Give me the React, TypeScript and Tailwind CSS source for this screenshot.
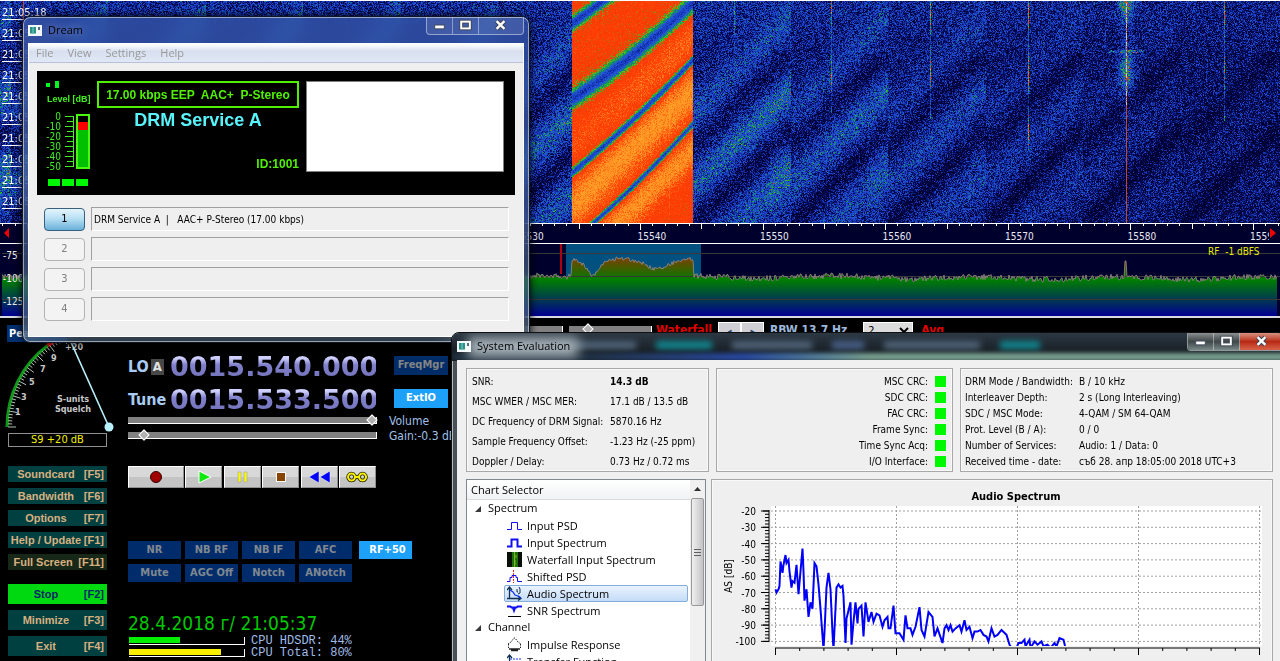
import React, { useEffect, useRef } from "react";
import clsx from "clsx";

const tahoma = "font-['DejaVu_Sans_Condensed','DejaVu_Sans',sans-serif]";
const segoe = "font-['Open_Sans','Noto_Sans',sans-serif]";
const arial = "font-['Liberation_Sans',Arial,sans-serif]";

// small seeded generator, so the noise is the same on every load
const createRandom = (seed: number) => () => {
  seed = (seed * 1664525 + 1013904223) >>> 0;
  return seed / 4294967296;
};

/* ---------- waterfall ---------- */

const palette: [number, number[]][] = [
  [0, [0, 0, 44]],
  [0.15, [4, 12, 92]],
  [0.32, [24, 58, 190]],
  [0.45, [36, 84, 222]],
  [0.55, [26, 120, 140]],
  [0.63, [18, 165, 60]],
  [0.7, [70, 205, 30]],
  [0.76, [250, 56, 4]],
  [0.84, [255, 66, 6]],
  [0.93, [255, 148, 36]],
  [1.1, [255, 190, 40]],
];

const toColor = (v: number) => {
  if (v <= 0) return palette[0][1];
  for (let i = 1; i < palette.length; i++) {
    const [stop, to] = palette[i];
    const [prev, from] = palette[i - 1];
    if (v <= stop) {
      const k = (v - prev) / (stop - prev);
      return from.map((c, n) => c + (to[n] - c) * k);
    }
  }
  return palette[palette.length - 1][1];
};

const gauss = (d: number, w: number) => Math.exp(-(d * d) / (w * w));

// dark fades crossing the broadcast: y on the left edge, y on the right edge, half width
const fades = [
  [22, -78, 6],
  [98, 1, 8],
  [171, 58, 4],
  [240, 122, 3],
];

// spurs: x, last y, strength
const carriers = [
  [734, 50, 0.3],
  [831, 112, 0.4],
  [930, 118, 0.5],
  [1028, 150, 0.58],
  [1224, 120, 0.48],
];

const signalLevel = (x: number, y: number) => {
  if (x >= 572 && x < 693) {
    const t = (x - 572) / 121;
    let level = 0.8;
    const mid = 136 - 108 * t;
    const low = 205 - 116 * t;
    level += 0.07 * gauss(y - mid - 6, 22) * (0.6 + t * 0.4);
    level += 0.14 * gauss(y - low, 24);
    level += 0.13 * gauss(y - low - 60, 18);
    if (x === 641 || x === 669) level += 0.03;
    for (const [left, right, width] of fades) {
      const d = Math.abs(y - (left + (right - left) * t + 4 * Math.sin(t * 3.1)));
      level -= 0.42 * gauss(d, width) + 0.06 * gauss(d, width * 2);
    }
    return level;
  }

  const cell = (((x - 693) % 97.5) + 97.5) % 97.5;
  const reach = x < 572 ? 0.85 : Math.max(0.08, 1 - (x - 693) / 560);
  const line = y + cell * 0.98;
  const rise = 0.65 + (cell / 97.5) * 0.4;
  let level = 0.13 + 0.06 * reach;
  level += 0.33 * reach * rise * gauss(line - 184, 22);
  level += 0.17 * reach * gauss(line - 112, 20);
  level += 0.26 * reach * rise * gauss(line - 264, 24);
  level -= 0.08 * gauss(line - 146, 12) * (y > 50 ? 1 : 0);
  level -= 0.12 * gauss(line - 224, 12);
  if (y < 60) level += 0.08 * (1 - y / 60);
  if (cell > 76 && y > 130) level += 0.08 * reach;
  return level;
};

const Waterfall = () => {
  const ref = useRef<HTMLCanvasElement>(null);

  useEffect(() => {
    const canvas = ref.current;
    const ctx = canvas?.getContext("2d");
    if (!canvas || !ctx) return;
    const { width, height } = canvas;
    const image = ctx.createImageData(width, height);
    const random = createRandom(77);

    for (let y = 0; y < height; y++) {
      for (let x = 0; x < width; x++) {
        const inside = x >= 572 && x < 693;
        const noise = (random() + random() - 1) * (inside ? 0.07 : 0.33);
        let v = signalLevel(x, y) + noise;
        if (inside && v < 0.72) v += (random() - 0.5) * 0.16;
        for (const [cx, end, gain] of carriers) {
          if (x === cx && y < end) v += gain * (0.7 + 0.3 * Math.sin(y / 9));
        }
        const d = Math.abs(x - 1126);
        if (d < 14 && y < 118) v += 0.42 * gauss(d, 7) * (0.55 + 0.45 * Math.sin(y / 11 + 1.5));
        if (d < 18 && Math.abs(y - 50) < 2) v += 0.36 * random();
        let [r, g, b] = toColor(v);
        if (d === 0 || x === 23) {
          [r, g, b] = y < 105 && x > 30 && random() > 0.4 ? [205, 195, 150] : [190, 70, 50];
        }
        const i = (y * width + x) * 4;
        image.data[i] = r;
        image.data[i + 1] = g;
        image.data[i + 2] = b;
        image.data[i + 3] = 255;
      }
    }
    ctx.putImageData(image, 0, 0);
  }, []);

  return (
    <canvas ref={ref} width={1280} height={222} className="block h-[222px] w-full" />
  );
};

const times = ["18", "16", "14", "12", "10", "08", "06", "04", "02", "00"];

const TimeMarks = () => (
  <ul className="absolute left-0.5 top-1 flex flex-col gap-[5px] text-[11px] leading-4 text-white">
    {times.map((time) => (
      <li key={time}>
        <span className="underline underline-offset-3">21:0</span>5:{time}
      </li>
    ))}
  </ul>
);

const FrequencyScale = () => {
  const ticks = Array.from({ length: 105 }, (_, i) => i - 52);
  return (
    <svg className="block h-[21px] w-full bg-[#00002c]">
      <g stroke="#fff">
        <line x1="0" x2="100%" y1="0.5" y2="0.5" />
        <line x1="0" x2="100%" y1="20.5" y2="20.5" />
        {ticks.map((t) => {
          const x = Math.round(640 + t * 12.26) + 0.5;
          return <line key={t} x1={x} x2={x} y1="1" y2={t % 10 === 0 ? 7 : t % 5 === 0 ? 6 : 3} />;
        })}
      </g>
      <g fill="#e8e8f4" fontSize="10">
        {[15530, 15540, 15550, 15560, 15570, 15580, 15590].map((f, i) => (
          <text key={f} x={515 + i * 122.5} y="17">
            {f}
          </text>
        ))}
      </g>
      <rect x="1269" y="3" width="11" height="16" fill="#00002c" />
      <path d="M9 5v10l-5-5zM1270 5v10l6-5z" fill="#f00000" />
    </svg>
  );
};

const buildSpectrum = () => {
  const random = createRandom(9);
  const points: string[] = [];
  for (let x = 2; x <= 1277; x++) {
    let y = 33 + Math.sin(x / 23) * 1.2 + (random() - 0.5) * 6;
    if (x > 900) y += 1;
    if (x >= 572 && x <= 693) {
      const t = (x - 572) / 121;
      y = 15 + (random() - 0.5) * 4;
      y += 15 * gauss(x - 593, 9) + 10 * gauss(x - 657, 16) + (t < 0.2 ? 1 : 0);
    }
    if (x === 1125 || x === 1126) y = 17;
    points.push(`${x},${y.toFixed(1)}`);
  }
  return points.join(" ");
};

const spectrumLine = buildSpectrum();

const RfSpectrum = () => (
  <svg className="block h-[74px] w-full bg-[#00002c]">
    <defs>
      <linearGradient id="rf" gradientUnits="userSpaceOnUse" x1="0" x2="0" y1="8" y2="73">
        <stop offset="0" stopColor="#a03000" />
        <stop offset="0.36" stopColor="#187000" />
        <stop offset="0.42" stopColor="#008000" />
        <stop offset="0.98" stopColor="#000090" />
      </linearGradient>
    </defs>
    <rect x="566" y="0" width="135" height="34" fill="#005080" />
    <polygon points={`2,73 ${spectrumLine} 1277,73`} fill="url(#rf)" />
    <g stroke="#383838">
      <line x1="2" x2="100%" y1="9.5" y2="9.5" />
      <line x1="2" x2="100%" y1="32.5" y2="32.5" />
      <line x1="2" x2="100%" y1="55.5" y2="55.5" />
    </g>
    <polyline points={spectrumLine} fill="none" stroke="#9a8a8a" strokeWidth="0.8" />
    <rect x="560" y="0" width="2" height="30" fill="#b00010" />
    <rect x="0" y="72" width="100%" height="2" fill="#d8d8e0" />
    <g fill="#f0f0f0" fontSize="10">
      <text x="3" y="15">-75</text>
      <text x="3" y="38">-100</text>
      <text x="3" y="61">-125</text>
    </g>
    <text x="1208" y="11" fill="#e8e800" fontSize="10" xmlSpace="preserve">
      RF  -1 dBFS
    </text>
  </svg>
);

/* ---------- receiver controls ---------- */

const range = clsx(
  "h-[7px] shrink-0 appearance-none border-b border-r border-white bg-[#808080]",
  "[&::-webkit-slider-thumb]:size-2 [&::-webkit-slider-thumb]:appearance-none [&::-webkit-slider-thumb]:rotate-45",
  "[&::-webkit-slider-thumb]:border [&::-webkit-slider-thumb]:border-white [&::-webkit-slider-thumb]:bg-[#b0b0b0]"
);

const DisplayBar = () => (
  <div className="flex h-6 items-start overflow-hidden bg-black pl-[7px] pt-1 text-[12px] font-bold leading-4">
    <button className="mt-[3px] h-[18px] w-[60px] bg-[#003070] px-0.5 text-left text-[11px] leading-[18px] text-white">
      Peak
    </button>
    <input type="range" aria-label="Contrast" defaultValue={0} className={clsx(range, "ml-[380px] mt-1 w-[116px]")} />
    <input type="range" aria-label="Waterfall speed" defaultValue={20} className={clsx(range, "ml-1.5 mt-1 w-[83px]")} />
    <span className="ml-1 text-[#e00000]">Waterfall</span>
    <div className="ml-1.5 flex text-[9px] text-[#304878]">
      <button className="h-4 w-[23px] border border-white bg-[#d0d0d4]" aria-label="Less">◂</button>
      <button className="h-4 w-[23px] border border-white bg-[#d0d0d4]" aria-label="More">▸</button>
    </div>
    <span className="ml-1.5 text-[#9cb8dc]">RBW 13.7 Hz</span>
    <select aria-label="Averaging" className="ml-4 h-4 w-[50px] border border-white bg-[#dcdcdc] text-[11px] font-normal text-black">
      <option>2</option>
    </select>
    <span className="ml-2 text-[#e00000]">Avg</span>
  </div>
);

const polar = (angle: number, radius: number) => {
  const a = (angle * Math.PI) / 180;
  return [109 - radius * Math.cos(a), 85 - radius * Math.sin(a)];
};

const Smeter = () => {
  const [gx, gy] = polar(53, 102);
  const [rx, ry] = polar(70, 102);
  const marks = Array.from({ length: 38 }, (_, i) => i * 1.8);
  return (
    <svg className="block h-[91px] w-[120px]">
      <path d={`M7 85A102 102 0 0 1 ${gx} ${gy}`} fill="none" stroke="#109818" strokeWidth="3" />
      <path d={`M${gx} ${gy}A102 102 0 0 1 ${rx} ${ry}`} fill="none" stroke="#f01010" strokeWidth="4" />
      {marks.map((m, i) => {
        const [x1, y1] = polar(m, 101);
        const [x2, y2] = polar(m, i % 5 === 0 ? 93 : 97);
        return <line key={m} x1={x1} y1={y1} x2={x2} y2={y2} stroke="#c8d8c8" strokeWidth="0.9" />;
      })}
      <g fill="#c8c8c8" fontSize="9" fontWeight="bold">
        <text x="15" y="73">1</text>
        <text x="21" y="58">3</text>
        <text x="29" y="43">5</text>
        <text x="40" y="30">7</text>
        <text x="51" y="19">9</text>
        <text x="65" y="8">+20</text>
        <text x="73" y="60" textAnchor="middle">S-units</text>
        <text x="73" y="70" textAnchor="middle">Squelch</text>
      </g>
      <line x1="109" y1="85" x2="70" y2="-2" stroke="#b8f0fc" strokeWidth="1.6" />
      <circle cx="109" cy="85" r="4.5" fill="#b8f0fc" />
    </svg>
  );
};

const menuKeys = [
  { label: "Soundcard", key: "[F5]", style: "h-4 bg-[#004040] text-[#d8b080]" },
  { label: "Bandwidth", key: "[F6]", style: "h-4 bg-[#004040] text-[#d8b080]" },
  { label: "Options", key: "[F7]", style: "h-4 bg-[#004040] text-[#d8b080]" },
  { label: "Help / Update", key: "[F1]", style: "h-4 bg-[#004040] text-[#d8b080]" },
  { label: "Full Screen", key: "[F11]", style: "h-4 bg-[#182818] text-[#d8b080]" },
  { label: "Stop", key: "[F2]", style: "mt-2 h-5 bg-[#00d810] text-[#002868]" },
  { label: "Minimize", key: "[F3]", style: "h-5 bg-[#004040] text-[#d8b080]" },
  { label: "Exit", key: "[F4]", style: "h-5 bg-[#004040] text-[#d8b080]" },
];

const MeterColumn = () => (
  <div className="flex w-[128px] shrink-0 flex-col">
    <Smeter />
    <output className="ml-2 h-[14px] w-[99px] border border-[#909090] text-center text-[11px] leading-3 text-[#f0f000]">
      S9 +20 dB
    </output>
    <div className={clsx("ml-2 mt-[19px] flex w-[99px] flex-col gap-1.5 text-[11px] font-bold", arial)}>
      {menuKeys.map(({ label, key, style }) => (
        <button key={key} className={clsx("flex items-center pr-[3px]", style)}>
          <span className="grow text-center">{label}</span>
          <span className="whitespace-nowrap">{key}</span>
        </button>
      ))}
    </div>
  </div>
);

const Frequency = ({ label, value, children }: { label: string; value: string; children?: React.ReactNode }) => (
  <div className="flex h-[22px] items-center">
    <span className="flex w-[42px] items-center gap-0.5 text-[16px] font-bold text-[#a8ccf4]">
      {label}
      {children}
    </span>
    <span className="w-[206px] bg-linear-to-b from-[#d0d0ff] from-10% via-[#8080cc] via-40% to-[#7474bc] bg-clip-text font-['DejaVu_Sans'] text-[27px] font-bold leading-[22px] text-transparent">
      {value}
    </span>
  </div>
);

const transport = [
  { name: "Record", width: "w-[56px]", icon: <circle cx="9" cy="9" r="5.5" fill="#a00000" stroke="#300" /> },
  { name: "Play", width: "w-[37px]", icon: <path d="M4 3v12l12-6z" fill="#10e810" stroke="#fff" /> },
  { name: "Pause", width: "w-[37px]", icon: <path d="M5 4h3v10H5zM11 4h3v10h-3z" fill="#f8f800" stroke="#a8a8a8" strokeWidth="0.6" /> },
  { name: "Halt", width: "w-[37px]", icon: <rect x="4.5" y="4.5" width="9" height="9" fill="#884400" stroke="#fff" /> },
  { name: "Rewind", width: "w-[37px]", icon: <path d="M9 3v12L-1 9zM20 3v12L10 9z" fill="#0000f8" stroke="#fff" strokeWidth="0.5" /> },
  {
    name: "Loop",
    width: "w-[37px]",
    icon: (
      <g fill="none">
        <path d="M3.5 5.5a3.5 3.5 0 1 0 .1 0zM14.5 5.5a3.5 3.5 0 1 0 .1 0zM7 9h4" stroke="#202000" strokeWidth="3.6" />
        <path d="M3.5 5.5a3.5 3.5 0 1 0 .1 0zM14.5 5.5a3.5 3.5 0 1 0 .1 0zM7 9h4" stroke="#f8f000" strokeWidth="2" />
      </g>
    ),
  },
];

const filters = ["NR", "NB RF", "NB IF", "AFC", "Mute", "AGC Off", "Notch", "ANotch"];

const CpuLoad = ({ label, value, bar }: { label: string; value: number; bar: string }) => (
  <div className="flex h-3 items-center">
    <span className="ml-px flex h-2 w-[116px] border-b border-r border-white">
      <span className={clsx("h-1.5", bar)} style={{ width: `${value}%` }} />
    </span>
    <span className="ml-1.5 whitespace-pre font-['Liberation_Mono',monospace] text-[12px] leading-3 text-[#a0bce8]">
      {label}
    </span>
  </div>
);

const TunerColumn = () => (
  <div className="flex w-[322px] flex-col pt-3.5">
    <div className="flex items-start">
      <div className="flex flex-col gap-[11px]">
        <Frequency label="LO" value="0015.540.000">
          <span className="bg-[#484848] px-0.5 text-[13px] leading-4 text-[#e0e0e0]">A</span>
        </Frequency>
        <Frequency label="Tune" value="0015.533.500" />
      </div>
      <div className="ml-[18px] flex w-[54px] flex-col gap-3.5 text-[11px] font-bold">
        <button className="h-[19px] bg-[#002c68] text-[#848484]">FreqMgr</button>
        <button className="h-[19px] bg-[#1ca0f8] text-white">ExtIO</button>
      </div>
    </div>
    <div className="mt-0.5 flex flex-col text-[12px] text-[#a0c0e8]">
      <label className="flex h-[15px] items-center gap-3">
        <input type="range" defaultValue={100} className={clsx(range, "w-[249px]")} />
        Volume
      </label>
      <label className="flex h-[15px] items-center gap-3 whitespace-nowrap">
        <input type="range" defaultValue={5} className={clsx(range, "w-[249px]")} />
        Gain:-0.3 dB
      </label>
    </div>
    <div className="mt-[23px] flex w-[248px] justify-between">
      {transport.map(({ name, width, icon }) => (
        <button
          key={name}
          aria-label={name}
          className={clsx(
            "flex h-[22px] items-center justify-center border border-b-[#909090] border-l-white border-r-[#909090] border-t-white",
            "bg-linear-to-b from-[#d8d8d8] from-48% via-white via-50% to-[#c4c4c4] to-52%",
            width
          )}
        >
          <svg viewBox="0 0 18 18" className="size-[18px] overflow-visible">{icon}</svg>
        </button>
      ))}
    </div>
    <div className="mt-[53px] flex gap-[7px] text-[11px] font-bold">
      <div className="grid grid-cols-4 gap-x-1 gap-y-[5px]">
        {filters.map((name) => (
          <button key={name} className="h-[18px] w-[53px] bg-[#002c6c] text-[#808890]">
            {name}
          </button>
        ))}
      </div>
      <button className="h-[18px] w-[53px] bg-[#1ca0f8] pl-1 text-white">RF+50</button>
    </div>
    <time className="mt-[31px] text-[19px] leading-5 text-[#00c800]">28.4.2018 г/ 21:05:37</time>
    <div className="mt-0.5">
      <CpuLoad label="CPU HDSDR: 44%" value={44} bar="bg-[#00f000]" />
      <CpuLoad label="CPU Total: 80%" value={80} bar="bg-[#f8f000]" />
    </div>
  </div>
);

/* ---------- windows ---------- */

const WindowIcon = () => (
  <svg viewBox="0 0 14 11" className="h-[11px] w-3.5 shrink-0">
    <rect width="14" height="11" fill="#f4f8f8" />
    <rect x="2" y="2" width="6" height="6.5" fill="#2f8f80" />
    <rect x="4" y="2" width="2" height="6.5" fill="#50b0b0" />
    <path d="M10 2h2v3h-2z" fill="#507080" />
  </svg>
);

const TitleButtons = ({ danger }: { danger?: boolean }) => {
  const plain = danger
    ? "bg-linear-to-b from-[#8c9090] via-[#404848] to-[#788888]"
    : "bg-white/10";
  return (
    <div className="flex h-[18px] self-start overflow-hidden rounded-b border border-t-0 border-white/50">
      <button aria-label="Minimize window" className={clsx("w-[26px] border-r border-white/40", plain)}>
        <svg viewBox="0 0 26 17" className="h-[17px] w-[25px]">
          <rect x="8" y="8" width="10" height="4" fill="#fff" stroke="#404858" />
        </svg>
      </button>
      <button aria-label="Maximize window" className={clsx("w-[26px] border-r border-white/40", plain)}>
        <svg viewBox="0 0 26 17" className="h-[17px] w-[25px]">
          <rect x="8.5" y="4.5" width="9" height="7" fill="none" stroke="#404858" strokeWidth="4" />
          <rect x="8.5" y="4.5" width="9" height="7" fill="none" stroke="#fff" strokeWidth="2" />
        </svg>
      </button>
      <button
        aria-label="Close window"
        className={clsx("w-[44px]", danger ? "bg-linear-to-b from-[#d89080] via-[#b82810] to-[#d86048]" : "bg-white/10")}
      >
        <svg viewBox="0 0 44 17" className="h-[17px] w-[43px]">
          <path d="M18 4l8 8M26 4l-8 8" stroke="#404858" strokeWidth="4.5" />
          <path d="M18 4l8 8M26 4l-8 8" stroke="#fff" strokeWidth="2.4" />
        </svg>
      </button>
    </div>
  );
};

const LevelMeter = () => (
  <div className={clsx("flex w-[52px] flex-col text-[#40f020]", tahoma)}>
    <svg className="ml-px h-2 w-4 fill-[#00f820]">
      <rect y="2" width="4" height="4" />
      <rect x="9" width="4" height="7" />
    </svg>
    <span className={clsx("mt-1 whitespace-nowrap pl-0.5 text-[9px] font-bold leading-3", arial)}>Level [dB]</span>
    <svg className="mt-1.5 h-[62px] w-[52px]">
      {[0, 1, 2, 3, 4, 5].map((n) => (
        <text key={n} x="16" y={9 + n * 10} textAnchor="end" fontSize="10" fill="#40f020">
          {n === 0 ? "0" : `-${n}0`}
        </text>
      ))}
      <path
        d="M20 5.5h8M22 10.5h6M20 15.5h8M22 20.5h6M20 25.5h8M22 30.5h6M20 35.5h8M22 40.5h6M20 45.5h8M22 50.5h6M20 55.5h8M28.5 5v51"
        stroke="#40f020"
      />
      <rect x="32" y="4" width="12" height="53" fill="#000" stroke="#48f810" strokeWidth="2" />
      <rect x="33" y="11" width="10" height="8" fill="#f80000" />
      <rect x="33" y="19" width="10" height="37" fill="#00c000" />
    </svg>
    <div className="mt-1.5 flex gap-0.5 pl-[3px]">
      {[0, 1, 2].map((n) => (
        <span key={n} className="h-[7px] w-3 bg-[#00f800]" />
      ))}
    </div>
  </div>
);

const services = ["DRM Service A  |   AAC+ P-Stereo (17.00 kbps)", "", "", ""];

const DreamWindow = () => (
  <section
    className={clsx(
      "absolute left-[22px] top-4 w-[508px] rounded-lg border border-[#101828] px-[5px] pb-[5px] shadow-[0_0_8px_#000]",
      "bg-linear-to-b from-[#3858a8]/70 to-[#506880]/60 inset-ring inset-ring-white/50 backdrop-blur-sm",
      tahoma
    )}
  >
    <header className={clsx("flex h-[26px] items-center text-[11px] text-black", segoe)}>
      <WindowIcon />
      <h1 className="ml-1.5 grow text-shadow-[0_0_8px_#a8b8e0]">Dream</h1>
      <TitleButtons />
    </header>
    <div className="border border-white bg-[#efefef] pb-[15px]">
      <nav className={clsx("flex h-[19px] items-center gap-3.5 border-b border-[#b8c0dc] bg-linear-to-b from-white via-[#d8e0f0] via-40% to-[#e0e8f6] px-[7px] text-[11px] text-[#989898]", segoe)}>
        {["File", "View", "Settings", "Help"].map((item) => (
          <button key={item}>{item}</button>
        ))}
      </nav>
      <div className="mx-2 mt-2 flex h-[124px] bg-black pl-2 pr-[11px] pt-2.5">
        <LevelMeter />
        <div className={clsx("flex w-[202px] flex-col font-bold", arial)}>
          <p className="h-[27px] whitespace-pre border-2 border-[#50f000] text-center text-[12px] leading-6 text-[#50f000]">
            17.00 kbps EEP  AAC+  P-Stereo
          </p>
          <p className="text-center text-[18px] leading-6 text-[#58f4fc]">DRM Service A</p>
          <p className="mt-6 text-right text-[12px] leading-4 text-[#50f000]">ID:1001</p>
        </div>
        <div className="ml-[7px] h-[91px] grow border border-[#808080] bg-white" />
      </div>
      <ul className="ml-[15px] mr-[14px] mt-3 flex flex-col gap-1.5 text-[10px]">
        {services.map((service, i) => (
          <li key={i} className="flex h-6 items-center gap-1.5">
            <button
              className={clsx(
                "h-[23px] w-[41px] rounded-sm border text-[11px]",
                i === 0
                  ? "border-[#386080] bg-linear-to-b from-[#e4f4fc] via-[#b8e0f4] via-45% to-[#68b0d8]"
                  : "border-[#b0b4b4] bg-[#f3f3f3] text-[#808080]"
              )}
            >
              {i + 1}
            </button>
            <span className="h-6 grow whitespace-pre border border-b-white border-l-[#a0a0a0] border-r-white border-t-[#a0a0a0] pl-0.5 leading-6">
              {service}
            </span>
          </li>
        ))}
      </ul>
    </div>
  </section>
);

const signalRows = [
  ["SNR:", "14.3 dB"],
  ["MSC WMER / MSC MER:", "17.1 dB / 13.5 dB"],
  ["DC Frequency of DRM Signal:", "5870.16 Hz"],
  ["Sample Frequency Offset:", "-1.23 Hz (-25 ppm)"],
  ["Doppler / Delay:", "0.73 Hz / 0.72 ms"],
];

const crcRows = ["MSC CRC:", "SDC CRC:", "FAC CRC:", "Frame Sync:", "Time Sync Acq:", "I/O Interface:"];

const modeRows = [
  ["DRM Mode / Bandwidth:", "B / 10 kHz"],
  ["Interleaver Depth:", "2 s (Long Interleaving)"],
  ["SDC / MSC Mode:", "4-QAM / SM 64-QAM"],
  ["Prot. Level (B / A):", "0 / 0"],
  ["Number of Services:", "Audio: 1 / Data: 0"],
  ["Received time - date:", "съб 28. апр 18:05:00 2018 UTC+3"],
];

const group = "border border-[#a8a8a8] bg-[#efefef] inset-ring inset-ring-white/60";

const InfoPanels = () => (
  <div className="flex gap-[7px] whitespace-nowrap text-[10px]">
    <dl className={clsx("h-[104px] w-[243px] shrink-0 px-[5px] py-0.5", group)}>
      {signalRows.map(([label, value], i) => (
        <div key={label} className="flex h-5 items-center">
          <dt className="w-[138px]">{label}</dt>
          <dd className={clsx(i === 0 && "font-bold")}>{value}</dd>
        </div>
      ))}
    </dl>
    <ul className={clsx("h-[104px] w-[237px] shrink-0 px-1.5 py-1", group)}>
      {crcRows.map((label) => (
        <li key={label} className="flex h-4 items-center justify-end gap-[7px]">
          {label}
          <span className="size-[11px] bg-[#00f800]" />
        </li>
      ))}
    </ul>
    <dl className={clsx("h-[104px] grow px-1 py-1", group)}>
      {modeRows.map(([label, value]) => (
        <div key={label} className="flex h-4 items-center">
          <dt className="w-[114px]">{label}</dt>
          <dd>{value}</dd>
        </div>
      ))}
    </dl>
  </div>
);

const charts = [
  { name: "Input PSD", icon: <path d="M0 11.5h4.5v-7h6v7H15" fill="none" stroke="#1010f0" /> },
  { name: "Input Spectrum", icon: <path d="M0 11.5h4.5v-7h6v7H15" fill="none" stroke="#1010f0" strokeWidth="2" /> },
  {
    name: "Waterfall Input Spectrum",
    icon: (
      <>
        <rect width="15" height="15" fill="#081008" />
        <rect x="5" width="6" height="15" fill="#207010" />
        <path d="M7.5 0v15M9 3v3M8 8v5" stroke="#78b820" />
      </>
    ),
  },
  {
    name: "Shifted PSD",
    icon: (
      <g fill="none">
        <path d="M0 12.5h3v-4h2v-2h4v2h1.500v4H15" stroke="#1010f0" />
        <path d="M6.5 1v13" stroke="#f02020" strokeDasharray="2 1" />
      </g>
    ),
  },
  {
    name: "Audio Spectrum",
    icon: (
      <g fill="none">
        <path d="M2.5 13V2M0 4l2.5-3L5 4M0 12.5h14M11 10l3 2.500-3 2" stroke="#103050" strokeWidth="1.3" />
        <path d="M3 4l3 2 2 3 3 1 3 2" stroke="#1030f0" strokeWidth="1.3" />
        <path d="M10 3v3h1M12 1l1 2v4l-2 1" stroke="#103050" />
      </g>
    ),
  },
  {
    name: "SNR Spectrum",
    icon: (
      <g fill="none">
        <path d="M0 3.5h3.5l1 1h5l1-1H15M7 4v5M5.5 4l1.500 4 1.500-4" stroke="#1010f0" strokeWidth="1.8" />
        <path d="M1 13.5h13" stroke="#000" />
      </g>
    ),
  },
];

const channelCharts = [
  {
    name: "Impulse Response",
    icon: (
      <g fill="none" stroke="#202020">
        <path d="M1 7l3-2 3-4 1 0 3 4 3 2M1.5 7v4M13.5 7v4" strokeDasharray="1.5 1.2" />
        <path d="M2 12h11M4 13.5h7" strokeWidth="1.6" />
      </g>
    ),
  },
  {
    name: "Transfer Function",
    icon: (
      <g fill="none">
        <path d="M2.5 14V2M0 4l2.500-3L5 4" stroke="#103050" strokeWidth="1.3" />
        <path d="M3 5h12M3 9h12" stroke="#1030f0" strokeDasharray="2 1" />
      </g>
    ),
  },
];

const ChartGroup = ({ title, items }: { title: string; items: typeof charts }) => (
  <li>
    <button className="flex h-[17px] items-center">
      <svg viewBox="0 0 6 6" className="ml-2 mr-[7px] size-1.5">
        <path d="M6 0v6H0z" fill="#383838" />
      </svg>
      {title}
    </button>
    <ul>
      {items.map(({ name, icon }) => (
        <li key={name} className="pl-[37px]">
          <button
            className={clsx(
              "flex h-[17px] w-full items-center gap-[5px] whitespace-nowrap border pl-0.5 leading-[15px]",
              name === "Audio Spectrum"
                ? "rounded-xs border-[#84acdc] bg-linear-to-b from-[#eaf3fd] to-[#c4dcf8]"
                : "border-transparent"
            )}
          >
            <svg viewBox="0 0 15 15" className="size-[15px]">{icon}</svg>
            {name}
          </button>
        </li>
      ))}
    </ul>
  </li>
);

const ChartSelector = () => (
  <div className={clsx("flex w-[240px] shrink-0 border border-[#808890] bg-white text-[11px]", segoe)}>
    <div className="grow">
      <h2 className="h-5 border-b border-[#d8dce0] bg-linear-to-b from-white to-[#f0f2f4] px-1 leading-5">Chart Selector</h2>
      <ul className="pr-0.5">
        <ChartGroup title="Spectrum" items={charts} />
        <ChartGroup title="Channel" items={channelCharts} />
      </ul>
    </div>
    <div className="flex w-[15px] flex-col items-center bg-[#f0f0f0]">
      <svg viewBox="0 0 7 4" className="my-[7px] h-1 w-[7px]">
        <path d="M0 4l3.500-4L7 4z" fill="#303030" />
      </svg>
      <div className="flex h-[108px] w-[13px] flex-col items-center justify-center gap-0.5 rounded-xs border border-[#989898] bg-linear-to-r from-[#f0f0f0] to-[#c4c4c8]">
        <span className="h-px w-[7px] bg-[#606060]" />
        <span className="h-px w-[7px] bg-[#606060]" />
        <span className="h-px w-[7px] bg-[#606060]" />
      </div>
    </div>
  </div>
);

// offset from the left axis, level in dB
const audio = [
  [0, -68], [1, -70], [3, -68], [4, -66], [5, -51], [7, -58], [8, -53], [10, -47], [11, -52], [13, -50],
  [14, -57], [16, -67], [17, -63], [19, -64], [21, -53], [23, -71], [25, -57], [27, -43], [28, -57], [29, -75],
  [31, -68], [33, -85], [35, -76], [37, -80], [39, -52], [41, -54], [43, -65], [45, -80], [48, -105], [49, -94],
  [51, -67], [53, -58], [55, -68], [57, -95], [58, -105], [60, -80], [61, -67], [63, -65], [65, -67], [67, -66],
  [68, -72], [70, -101], [71, -86], [73, -81], [75, -76], [76, -102], [78, -88], [80, -76], [82, -89], [83, -80],
  [86, -78], [88, -97], [90, -76], [93, -88], [94, -86], [96, -82], [98, -88], [101, -83], [104, -84], [107, -91],
  [109, -87], [112, -85], [113, -92], [115, -92], [118, -78], [120, -95], [124, -95], [128, -99], [130, -84], [132, -92],
  [135, -92], [137, -96], [140, -91], [144, -79], [146, -93], [149, -97], [153, -82], [157, -85], [159, -97], [162, -92],
  [167, -101], [169, -92], [171, -90], [173, -93], [175, -90], [177, -94], [180, -92], [184, -90], [186, -94], [189, -87],
  [191, -93], [194, -91], [197, -98], [199, -94], [202, -94], [205, -93], [208, -96], [211, -97], [213, -100], [216, -92],
  [219, -97], [222, -96], [226, -93], [231, -96], [234, -102], [236, -104], [241, -104], [243, -101], [246, -101], [249, -99],
  [250, -103], [254, -99], [255, -104], [259, -100], [262, -102], [266, -100], [268, -103], [272, -102], [275, -104], [279, -101],
  [281, -103], [284, -98], [288, -99], [290, -104],
];

const levelY = (db: number) => 31 + (-20 - db) * 1.63;

const AudioChart = () => {
  const levels = [-20, -30, -40, -50, -60, -70, -80, -90, -100];
  return (
    <div className={clsx("min-w-0 grow", group)}>
      <svg viewBox="0 0 560 192" className="block w-full text-black" fontSize="10">
        <text x="304" y="20" fontSize="11" fontWeight="bold" textAnchor="middle" className={tahoma}>
          Audio Spectrum
        </text>
        <rect x="59" y="26" width="491" height="140" fill="#fff" />
        <text transform="translate(20 96) rotate(-90)" textAnchor="middle">AS [dB]</text>
        {levels.map((db) => (
          <g key={db}>
            <text x="44" y={levelY(db) + 4} textAnchor="end">{db}</text>
            <line x1="59" x2="550" y1={levelY(db)} y2={levelY(db)} stroke="#a0a0a0" strokeDasharray="2 2" />
            <line x1="49" x2="57" y1={levelY(db)} y2={levelY(db)} stroke="#000" />
          </g>
        ))}
        {Array.from({ length: 41 }, (_, i) => (
          <line key={i} x1={i % 5 === 0 ? 51 : 53} x2="57" y1={levelY(-20 - i * 2)} y2={levelY(-20 - i * 2)} stroke="#000" />
        ))}
        <line x1="57" x2="57" y1="30" y2="162" stroke="#000" />
        {[63.5, 184.5, 305.5, 426.5, 547.5].map((x) => (
          <line key={x} x1={x} x2={x} y1="26" y2="166" stroke="#a0a0a0" strokeDasharray="2 2" />
        ))}
        <line x1="63" x2="548" y1="168" y2="168" stroke="#000" />
        {Array.from({ length: 21 }, (_, i) => (
          <line key={i} x1={63.5 + i * 24.2} x2={63.5 + i * 24.2} y1="168" y2={i % 5 === 0 ? 175 : 171} stroke="#000" />
        ))}
        <clipPath id="plot">
          <rect x="59" y="26" width="491" height="140" />
        </clipPath>
        <polyline
          clipPath="url(#plot)"
          points={audio.map(([x, db]) => `${63.5 + x},${levelY(db)}`).join(" ")}
          fill="none"
          stroke="#0000f8"
          strokeWidth="2"
        />
      </svg>
    </div>
  );
};

// what shows through the glass behind the evaluation window's title
const GlassGlow = () => (
  <div className="absolute inset-x-0 top-0 -z-10 flex h-[28px] flex-col justify-between overflow-hidden bg-linear-to-b from-[#2c3844] to-[#101418]">
    <div className="flex gap-5 pl-[120px] pt-2 blur-[3px]">
      <span className="h-2 w-16 bg-[#506478]" />
      <span className="h-2 w-14 bg-[#108890]" />
      <span className="h-2 w-20 bg-[#506478]" />
      <span className="h-2 w-8 bg-[#486088]" />
      <span className="h-2 w-24 bg-[#506478]" />
      <span className="h-2 w-10 bg-[#108890]" />
    </div>
    <div className="h-2 bg-linear-to-r from-[#203040] from-15% via-[#2848a0] via-35% to-[#78a090] to-50% blur-[2px]" />
    <div className="absolute left-4 top-1 h-5 w-[110px] bg-[#a8b4bc] blur-[6px]" />
  </div>
);

const EvaluationWindow = () => (
  <section
    className={clsx(
      "absolute -bottom-5 -right-1.5 left-[451px] top-[332px] isolate overflow-hidden rounded-t-lg border border-[#101010] bg-[#485058] pl-[5px] inset-ring inset-ring-white/60",
      tahoma
    )}
  >
    <GlassGlow />
    <header className={clsx("flex h-[27px] items-center text-[11px] text-black", segoe)}>
      <WindowIcon />
      <h1 className="ml-1.5 grow">System Evaluation</h1>
      <TitleButtons danger />
    </header>
    <div className="flex h-full flex-col gap-[7px] bg-[#f0f0f0] pl-[9px] pr-3 pt-2">
      <InfoPanels />
      <div className="flex grow gap-[5px]">
        <ChartSelector />
        <AudioChart />
      </div>
    </div>
  </section>
);

const App = () => {
  return (
    <main className={clsx("relative flex h-screen flex-col overflow-hidden bg-black", tahoma)}>
      <div className="relative border-t border-white">
        <Waterfall />
        <TimeMarks />
      </div>
      <FrequencyScale />
      <RfSpectrum />
      <DisplayBar />
      <div className="flex">
        <MeterColumn />
        <TunerColumn />
      </div>
      <DreamWindow />
      <EvaluationWindow />
    </main>
  );
};

export default App;
